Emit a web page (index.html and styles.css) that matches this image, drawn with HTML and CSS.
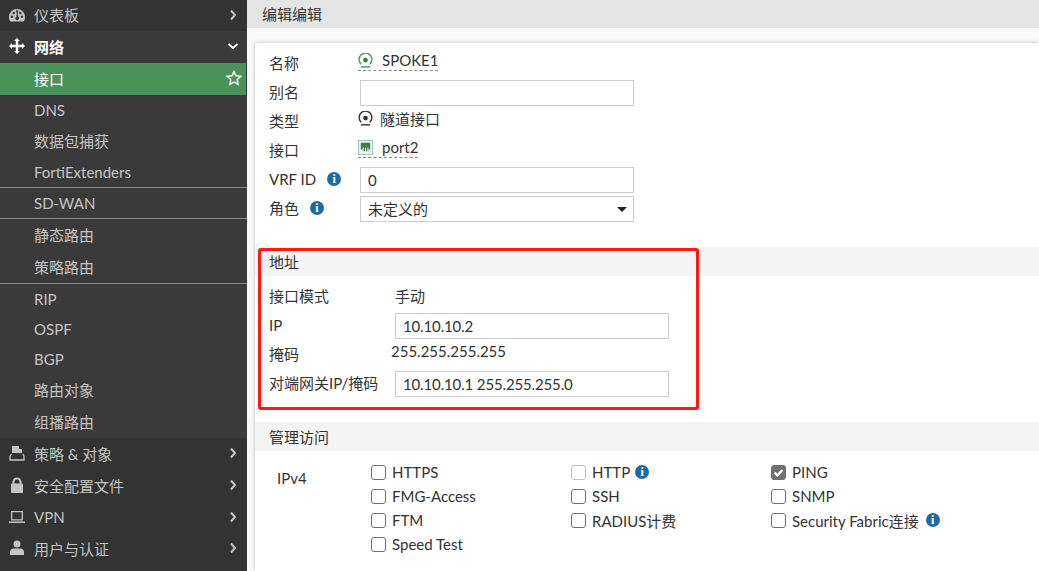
FILE: index.html
```html
<!DOCTYPE html>
<html lang="zh-CN">
<head>
  <meta charset="UTF-8">
  <title>编辑接口</title>
  <link rel="stylesheet" href="styles.css">
</head>
<body>
  <div class="app">
    <nav class="sidebar">
      <div class="nav-item h31">
        <svg class="nav-icon" viewBox="0 0 16 14"><path fill="#c4c4c4" fill-rule="evenodd" d="M8 1a8 8 0 0 0-8 8c0 1.600.4 3 1 4 .2.300.5.500.9.500h12.200c.4 0 .7-.2.900-.5.600-1 1-2.400 1-4a8 8 0 0 0-8-8ZM3 10a1.200 1.200 0 1 1 0-2.400 1.200 1.200 0 0 1 0 2.400Zm1.700-3.800a1.200 1.200 0 1 1 0-2.400 1.200 1.200 0 0 1 0 2.400ZM8 4.600a1.200 1.200 0 1 1 0-2.400 1.200 1.200 0 0 1 0 2.400Zm1.600 6.600a1.800 1.800 0 0 1-3.400-.6c0-.8.500-1.400 1.100-1.700l.7-4.300h.6l.7 4.300c.4.200.7.500.9.900Zm1.700-5a1.200 1.200 0 1 1 0-2.400 1.200 1.200 0 0 1 0 2.400ZM13 10a1.200 1.200 0 1 1 0-2.400 1.200 1.200 0 0 1 0 2.400Z"/></svg>
        <span>仪表板</span>
        <svg class="chev" viewBox="0 0 8 12"><path d="M2 1.500 6 6l-4 4.500" /></svg>
      </div>
      <div class="nav-group">
        <div class="nav-item open h32">
          <svg class="nav-icon" viewBox="0 0 16 16"><path fill="#fff" d="M8 0l3 3H9.200v3.800H13V5l3 3-3 3V9.200H9.200V13H11l-3 3-3-3h1.800V9.200H3V11L0 8l3-3v1.800h3.800V3H5z"/></svg>
          <span>网络</span>
          <svg class="chev down" viewBox="0 0 12 8"><path d="M1.500 2 6 6l4.500-4" /></svg>
        </div>
        <div class="nav-item sub active h32">
          <span>接口</span>
          <svg class="star" viewBox="0 0 16 16"><path d="M8 1.500l2 4.300 4.700.6-3.500 3.200.9 4.700L8 12l-4.100 2.300.9-4.700L1.300 6.400 6 5.800z"/></svg>
        </div>
        <div class="nav-item sub h31"><span>DNS</span></div>
        <div class="nav-item sub h31"><span>数据包捕获</span></div>
        <div class="nav-item sub sep h31"><span>FortiExtenders</span></div>
        <div class="nav-item sub sep h31"><span>SD-WAN</span></div>
        <div class="nav-item sub h32"><span>静态路由</span></div>
        <div class="nav-item sub sep h33"><span>策略路由</span></div>
        <div class="nav-item sub h31"><span>RIP</span></div>
        <div class="nav-item sub h30"><span>OSPF</span></div>
        <div class="nav-item sub h30"><span>BGP</span></div>
        <div class="nav-item sub h31"><span>路由对象</span></div>
        <div class="nav-item sub h32"><span>组播路由</span></div>
      </div>
      <div class="nav-item h32">
        <svg class="nav-icon" viewBox="0 0 16 16"><path fill="#c4c4c4" d="M3 1h6.500L13 4.500V8H3zM10 1.500V4h2.500z"/><path fill="none" stroke="#c4c4c4" stroke-width="1.300" d="M2.500 9 1 11.500V15h14v-3.500L14 9"/></svg>
        <span>策略 &amp; 对象</span>
        <svg class="chev" viewBox="0 0 8 12"><path d="M2 1.500 6 6l-4 4.500" /></svg>
      </div>
      <div class="nav-item h32">
        <svg class="nav-icon" viewBox="0 0 16 16"><path fill="#c4c4c4" d="M3.500 6.500V5a4.500 4.500 0 0 1 9 0v1.500h.5c.600 0 1 .4 1 1V15c0 .6-.4 1-1 1H3c-.6 0-1-.4-1-1V7.500c0-.6.400-1 1-1zm2 0h5V5a2.500 2.500 0 0 0-5 0z"/></svg>
        <span>安全配置文件</span>
        <svg class="chev" viewBox="0 0 8 12"><path d="M2 1.500 6 6l-4 4.500" /></svg>
      </div>
      <div class="nav-item h31">
        <svg class="nav-icon" viewBox="0 0 16 14"><path fill="#c4c4c4" fill-rule="evenodd" d="M2 1h12v9.500H2zm1.300 1.300v6.900h9.400V2.300zM0 11.500h16V13H0z"/></svg>
        <span>VPN</span>
        <svg class="chev" viewBox="0 0 8 12"><path d="M2 1.500 6 6l-4 4.500" /></svg>
      </div>
      <div class="nav-item h32">
        <svg class="nav-icon" viewBox="0 0 16 16"><circle fill="#c4c4c4" cx="8" cy="4" r="3.500"/><path fill="#c4c4c4" d="M1 15v-3c0-2 1.500-3.500 3.500-3.500h7C13.500 8.500 15 10 15 12v3z"/></svg>
        <span>用户与认证</span>
        <svg class="chev" viewBox="0 0 8 12"><path d="M2 1.500 6 6l-4 4.500" /></svg>
      </div>
    </nav>

    <main class="main">
      <div class="topbar">编辑编辑</div>
      <div class="card">
        <div class="basic">
          <div class="row r29">
            <label class="lbl">名称</label>
            <span class="val dashed">
              <svg class="ico" viewBox="0 0 16 16"><path fill="none" stroke="#4a9a5a" stroke-width="1.500" d="M3.500 12a6.800 6.800 0 1 1 9 0"/><circle fill="#2f7f45" cx="8" cy="7.500" r="2.500"/><path stroke="#4a9a5a" stroke-width="1.500" d="M3 14.800h10"/></svg>
              <span class="gap">SPOKE1</span>
            </span>
          </div>
          <div class="row r29">
            <label class="lbl">别名</label>
            <div class="input w274"></div>
          </div>
          <div class="row r29">
            <label class="lbl">类型</label>
            <span class="val">
              <svg class="ico" viewBox="0 0 16 16"><path fill="none" stroke="#333" stroke-width="1.500" d="M3.500 12a6.800 6.800 0 1 1 9 0"/><circle fill="#333" cx="8" cy="7.500" r="2.500"/><path stroke="#333" stroke-width="1.500" d="M3 14.800h10"/></svg>
              <span class="gap-s">隧道接口</span>
            </span>
          </div>
          <div class="row r29">
            <label class="lbl">接口</label>
            <span class="val dashed">
              <svg class="ico" viewBox="0 0 16 16"><rect fill="#eef3ee" stroke="#9dbccb" x="0.500" y="0.500" width="15" height="15"/><path fill="#3c7f4d" d="M3 3h10v7h-2v2H5v-2H3z"/><path stroke="#fff" stroke-width="1" d="M5.500 8v7M8 8v7M10.500 8v7"/></svg>
              <span class="gap">port2</span>
            </span>
          </div>
          <div class="row r29">
            <label class="lbl">VRF ID <i class="info">i</i></label>
            <div class="input w274">0</div>
          </div>
          <div class="row r29">
            <label class="lbl">角色 <i class="info">i</i></label>
            <div class="input w274 select">未定义的<b class="caret"></b></div>
          </div>
        </div>

        <div class="section-head addr-head">地址</div>
        <div class="addr">
          <div class="row r29">
            <label class="lbl">接口模式</label>
            <span class="val2">手动</span>
          </div>
          <div class="row r29">
            <label class="lbl">IP</label>
            <div class="input w274 in2">10.10.10.2</div>
          </div>
          <div class="row r29">
            <label class="lbl">掩码</label>
            <span class="val2 mask">255.255.255.255</span>
          </div>
          <div class="row r29">
            <label class="lbl">对端网关IP/掩码</label>
            <div class="input w274 in2">10.10.10.1 255.255.255.0</div>
          </div>
        </div>

        <div class="section-head access-head">管理访问</div>
        <div class="access">
          <div class="ipv4">IPv4</div>
          <div class="checks">
            <div class="chk"><i class="box"></i>HTTPS</div>
            <div class="chk"><i class="box off"></i>HTTP <i class="info">i</i></div>
            <div class="chk"><i class="box on"><svg viewBox="0 0 12 12"><path d="M2.500 6.200 5 8.700l4.500-5"/></svg></i>PING</div>
            <div class="chk"><i class="box"></i>FMG-Access</div>
            <div class="chk"><i class="box"></i>SSH</div>
            <div class="chk"><i class="box"></i>SNMP</div>
            <div class="chk"><i class="box"></i>FTM</div>
            <div class="chk"><i class="box"></i>RADIUS计费</div>
            <div class="chk"><i class="box"></i>Security Fabric连接 <i class="info far">i</i></div>
            <div class="chk"><i class="box"></i>Speed Test</div>
          </div>
        </div>

        <div class="highlight"></div>
      </div>
    </main>
  </div>
</body>
</html>
```
FILE: styles.css
```css
* {
  margin: 0;
  padding: 0;
  box-sizing: border-box;
}

html, body {
  height: 100%;
  overflow: hidden;
}

body {
  font-family: Lato, "Noto Sans CJK SC", sans-serif;
  font-size: 15px;
  color: #333;
}

.app {
  display: flex;
  height: 571px;
}

/* Sidebar */
.sidebar {
  width: 247px;
  flex-shrink: 0;
  background: #333333;
  color: #c4c4c4;
  overflow: hidden;
}

.nav-group {
  background: #3a3a3a;
}

.nav-item {
  display: flex;
  align-items: center;
  padding: 0 9px 2px;
}

.h30 { height: 30px; }
.h31 { height: 31px; }
.h32 { height: 32px; }
.h33 { height: 33px; }

.nav-item.sep {
  padding-bottom: 0;
  border-bottom: 1px solid #8a8a8a;
}

.nav-item.h33 {
  padding-bottom: 2px;
}

.nav-icon {
  width: 16px;
  height: 16px;
  margin-right: 9px;
  flex-shrink: 0;
}

.nav-item.sub {
  padding-left: 34px;
}

.nav-item.open {
  color: #fff;
  font-weight: 700;
}

.nav-item.active {
  background: #4a9259;
  color: #fff;
  margin-right: 1px;
}

.chev {
  width: 8px;
  height: 12px;
  margin-left: auto;
  margin-right: 1px;
  fill: none;
  stroke: #c4c4c4;
  stroke-width: 2;
}

.chev.down {
  width: 12px;
  height: 8px;
  margin-right: -1px;
  stroke: #fff;
}

.star {
  width: 16px;
  height: 16px;
  margin-left: auto;
  margin-right: -5px;
  fill: none;
  stroke: #fff;
  stroke-width: 1.4;
}

/* Main */
.main {
  flex: 1;
  background: #f9f9f9;
  min-width: 0;
}

.topbar {
  height: 28px;
  background: #e4e4e4;
  padding-left: 15px;
  line-height: 29px;
}

.card {
  position: relative;
  margin: 15px 0 0 8px;
  height: 528px;
  background: #fff;
  box-shadow: 0 0 4px rgba(0, 0, 0, 0.25);
}

.basic {
  padding: 5px 0 0 14px;
}

.basic .input {
  margin-top: 2px;
}

.basic .lbl {
  width: 91px;
}

.row {
  display: flex;
  align-items: center;
}

.r29 {
  height: 29px;
}

.lbl {
  width: 90px;
  flex-shrink: 0;
  display: flex;
  align-items: center;
  gap: 5px;
}

.val {
  display: inline-flex;
  align-items: center;
  margin: -4px 0 0 -2px;
  height: 20px;
}

.dashed {
  border-bottom: 1px dashed #888;
}

.ico {
  width: 15px;
  height: 15px;
  flex-shrink: 0;
}

.gap {
  margin-left: 9px;
}

.gap-s {
  margin-left: 7px;
}

.input {
  height: 26px;
  border: 1px solid #ccc;
  background: #fff;
  padding-left: 7px;
  line-height: 25px;
  color: #333;
}

.w274 {
  width: 274px;
}

.select {
  position: relative;
}

.caret {
  position: absolute;
  right: 6px;
  top: 10px;
  border-left: 5px solid transparent;
  border-right: 5px solid transparent;
  border-top: 5px solid #222;
}

.info {
  display: inline-block;
  width: 14px;
  height: 14px;
  border-radius: 50%;
  background: #1f6aa5;
  color: #fff;
  font: 700 12px/14px "Liberation Serif", serif;
  text-align: center;
}

.lbl .info {
  margin-left: 6px;
}

.section-head {
  height: 29px;
  background: #f4f4f4;
  padding-left: 14px;
  line-height: 30px;
}

.addr-head {
  margin-top: 25px;
}

.addr {
  padding: 6px 0 0 14px;
  height: 146px;
}

.addr .lbl {
  width: 126px;
  margin-top: -2px;
}

.val2 {
  margin-top: -2px;
}

.mask {
  margin: -7px 0 0 -4px;
}

.in2 {
  letter-spacing: -0.14px;
}

.access {
  display: flex;
  padding: 9px 0 0 22px;
}

.ipv4 {
  width: 94px;
  padding-top: 9px;
}

.checks {
  display: grid;
  grid-template-columns: repeat(3, 200px);
  grid-auto-rows: 24px;
}

.chk {
  display: flex;
  align-items: center;
  gap: 6px;
}

.chk .info {
  margin-left: -1px;
}

.chk .info.far {
  margin-left: 1px;
}

.box {
  width: 15px;
  height: 15px;
  border: 1px solid #707070;
  border-radius: 3px;
  background: #fff;
  flex-shrink: 0;
}

.box.off {
  border-color: #c0c0c0;
}

.box.on {
  background: #707070;
}

.box.on svg {
  display: block;
  width: 13px;
  height: 13px;
  fill: none;
  stroke: #fff;
  stroke-width: 2.2;
}

/* red box drawn over the address section */
.highlight {
  position: absolute;
  left: 3px;
  top: 205px;
  width: 441px;
  height: 162px;
  border: 3px solid #fe1a10;
  border-radius: 3px;
  pointer-events: none;
}
```
